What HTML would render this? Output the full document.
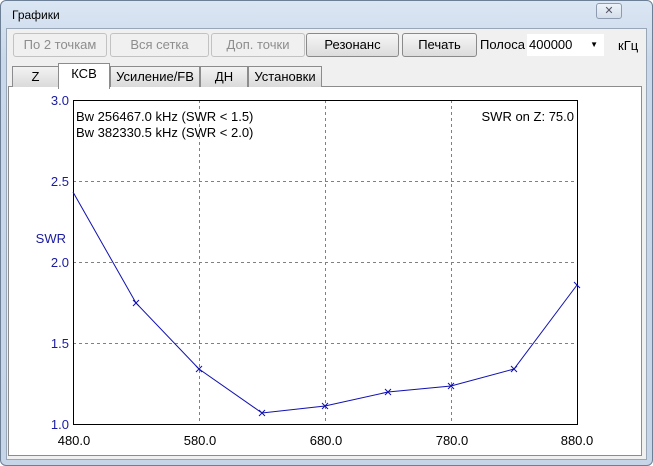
<!DOCTYPE html><html><head><meta charset="utf-8"><style>
body{margin:0;width:653px;height:466px;overflow:hidden;background:#fff;font-family:"Liberation Sans","DejaVu Sans",sans-serif;position:relative}
.a{position:absolute}
.win{left:0;top:0;width:651px;height:464px;border:1px solid #6d7f95;border-radius:6px;background:linear-gradient(#dbe6f3,#c9d8ea 60px,#c6d5e8);}
.btn{position:absolute;top:33px;height:22px;border:1px solid #8a8a8a;border-radius:3px;background:linear-gradient(#f6f6f6,#dcdcdc);font-size:13px;text-align:center;line-height:22px;color:#000}
.dis{border-color:#c2c2c2;background:#f0f0f0;color:#8d8d8d}
.tab{position:absolute;top:66px;height:20px;border:1px solid #8c8c8c;border-bottom:none;background:linear-gradient(#f3f3f3,#dadada);font-size:13px;line-height:20px;text-align:center}
</style></head><body>
<div class="a win"></div>
<div class="a" style="left:12px;top:8px;font-size:12px">Графики</div>
<div class="a" style="left:596px;top:3px;width:24px;height:14px;border:1px solid #8c9bb0;border-radius:3px;background:linear-gradient(#eef3f9,#d3deeb);font-size:11px;text-align:center;line-height:14px;color:#556">✕</div>
<div class="a" style="left:6px;top:28px;width:639px;height:430px;background:#f0f0f0;border:1px solid #98a6b8"></div>
<div class="btn dis" style="left:13px;width:92px">По 2 точкам</div>
<div class="btn dis" style="left:110px;width:97px">Вся сетка</div>
<div class="btn dis" style="left:211px;width:92px">Доп. точки</div>
<div class="btn" style="left:306px;width:91px">Резонанс</div>
<div class="btn" style="left:402px;width:73px">Печать</div>
<div class="a" style="left:480px;top:37px;font-size:13px">Полоса</div>
<div class="a" style="left:527px;top:34px;width:75px;height:22px;background:#fff;font-size:13px;line-height:22px;padding-left:2px">400000<span style="position:absolute;right:6px;font-size:8px">▼</span></div>
<div class="a" style="left:618px;top:38px;font-size:13px">кГц</div>
<div class="a" style="left:8px;top:86px;width:632px;height:368px;background:#fff;border:1px solid #8c8c8c"></div>
<div class="tab" style="left:12px;width:45px">Z</div>
<div class="tab" style="left:110px;width:88px">Усиление/FB</div>
<div class="tab" style="left:200px;width:46px">ДН</div>
<div class="tab" style="left:248px;width:72px">Установки</div>
<div class="tab" style="left:58px;top:63px;height:25px;width:50px;background:#fff;border-color:#8c8c8c">КСВ</div>
<svg class="a" style="left:0;top:0" width="653" height="466">
<g stroke="#808080" stroke-dasharray="3,3" stroke-width="1">
<line x1="199.5" y1="100" x2="199.5" y2="424"/><line x1="325.5" y1="100" x2="325.5" y2="424"/><line x1="451.5" y1="100" x2="451.5" y2="424"/>
<line x1="73" y1="181.5" x2="577" y2="181.5"/><line x1="73" y1="262.5" x2="577" y2="262.5"/><line x1="73" y1="343.5" x2="577" y2="343.5"/>
</g>
<rect x="73.5" y="100.5" width="504" height="324" fill="none" stroke="#000"/>
<polyline fill="none" stroke="#1010b0" points="73,192 136,303 199,369 262,413 325,406 388,392 451,386 514,369 577,285"/>
<g stroke="#1010b0">
<path d="M133,300l6,6M139,300l-6,6M196,366l6,6M202,366l-6,6M259,410l6,6M265,410l-6,6M322,403l6,6M328,403l-6,6M385,389l6,6M391,389l-6,6M448,383l6,6M454,383l-6,6M511,366l6,6M517,366l-6,6M574,282l6,6"/>
</g>
<g fill="#1a1aa0" font-size="13" text-anchor="end" font-family="Liberation Sans">
<text x="69" y="105">3.0</text><text x="69" y="186">2.5</text><text x="69" y="267">2.0</text><text x="69" y="348">1.5</text><text x="69" y="429">1.0</text>
<text x="66" y="243">SWR</text></g>
<g font-size="13" text-anchor="middle" font-family="Liberation Sans">
<text x="74" y="445">480.0</text><text x="200" y="445">580.0</text><text x="326" y="445">680.0</text><text x="452" y="445">780.0</text><text x="577" y="445">880.0</text></g>
<g font-size="13" font-family="Liberation Sans">
<text x="76" y="121">Bw 256467.0 kHz (SWR &lt; 1.5)</text><text x="76" y="137">Bw 382330.5 kHz (SWR &lt; 2.0)</text>
<text x="574" y="121" text-anchor="end">SWR on Z: 75.0</text></g>
</svg>
</body></html>
